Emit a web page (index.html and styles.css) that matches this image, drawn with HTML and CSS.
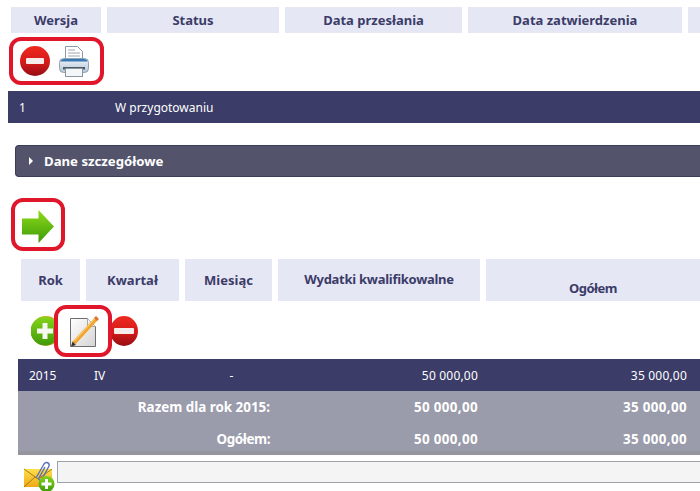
FILE: index.html
```html
<!DOCTYPE html>
<html lang="pl">
<head>
<meta charset="utf-8">
<title>Wersje</title>
<link rel="stylesheet" href="styles.css">
</head>
<body>
<svg class="defs" width="0" height="0" aria-hidden="true">
  <defs>
    <linearGradient id="red" x1="0" y1="0" x2="0" y2="1"><stop offset="0" stop-color="#ee2a20"/><stop offset=".55" stop-color="#d41a1a"/><stop offset="1" stop-color="#960e14"/></linearGradient>
    <linearGradient id="green" x1="0" y1="0" x2="0" y2="1"><stop offset="0" stop-color="#86d41a"/><stop offset="1" stop-color="#3f9a08"/></linearGradient>
    <linearGradient id="arrow" x1="0" y1="0" x2="0" y2="1"><stop offset="0" stop-color="#8fdc1c"/><stop offset="1" stop-color="#3c9a06"/></linearGradient>
    <linearGradient id="body" x1="0" y1="0" x2="0" y2="1"><stop offset="0" stop-color="#eef3f8"/><stop offset="1" stop-color="#b4c6d6"/></linearGradient>
    <linearGradient id="page" x1="0" y1="0" x2="1" y2="1"><stop offset="0" stop-color="#ffffff"/><stop offset="1" stop-color="#d4d4d4"/></linearGradient>
    <linearGradient id="env" x1="0" y1="0" x2="0" y2="1"><stop offset="0" stop-color="#ffdf4a"/><stop offset="1" stop-color="#f0a818"/></linearGradient>
  </defs>
</svg>
<div class="header h-one">
  <div class="hcell">Wersja</div>
  <div class="hcell">Status</div>
  <div class="hcell">Data przesłania</div>
  <div class="hcell">Data zatwierdzenia</div>
  <div class="hcell"></div>
</div>
<div class="tools-one">
  <div class="mark mark-wide">
    <svg width="30" height="30" viewBox="0 0 30 30"><circle cx="15" cy="15" r="15" fill="url(#red)"/><rect x="6" y="12" width="18" height="6" rx="1" fill="#f7ecec"/></svg>
    <svg width="30" height="31" viewBox="0 0 30 31">
      <path d="M6.500 .5h12l5 5v12h-17z" fill="#fff" stroke="#8d99a6"/>
      <path d="M9 4h7M9 7h12M9 10h12" stroke="#9aa6b2"/>
      <rect x=".5" y="12.500" width="29" height="14" rx="4" fill="url(#body)" stroke="#8fa3b5"/>
      <path d="M1.500 15.500c0-1.500 1.500-2.500 3.500-2.500h20c2 0 3.500 1 3.500 2.500z" fill="#3a78b4"/>
      <rect x="4" y="21" width="22" height="2.500" fill="#4c5a66"/>
      <rect x="6.500" y="22.500" width="17" height="8" fill="#f4f6f8" stroke="#8a96a2"/>
    </svg>
  </div>
</div>
<div class="band">
  <span class="band-num">1</span>
  <span>W przygotowaniu</span>
</div>
<div class="accordion">
  <span class="caret"></span>
  <span>Dane szczegółowe</span>
</div>
<div class="tools-two">
  <div class="mark mark-arrow">
    <svg width="32" height="33" viewBox="0 0 32 33"><path d="M0 8.500h16.500V0L32 16.500 16.500 33v-8.500H0z" fill="url(#arrow)"/></svg>
  </div>
</div>
<div class="header h-two">
  <div class="hcell">Rok</div>
  <div class="hcell">Kwartał</div>
  <div class="hcell">Miesiąc</div>
  <div class="hcell up">Wydatki kwalifikowalne</div>
  <div class="hcell down">Ogółem</div>
</div>
<div class="tools-three">
  <svg class="plus" width="30" height="30" viewBox="0 0 30 30"><circle cx="15" cy="15" r="15" fill="#e0a030"/><circle cx="14" cy="15" r="14.500" fill="url(#green)"/><path d="M11.500 7h5v5.500H22v5h-5.500V23h-5v-5.500H6v-5h5.500z" fill="#f4f8ee"/></svg>
  <div class="mark mark-edit">
    <svg width="30" height="31" viewBox="0 0 30 31">
      <path d="M.5 2.500h17l8 8v20H.5z" fill="url(#page)" stroke="#6e6e6e"/>
      <path d="M17.500 2.500v8h8" fill="#f4f4f4" stroke="#a8a8a8"/>
      <path d="M4 27L27 2" stroke="#f2a42a" stroke-width="4"/>
      <path d="M4.500 25L25.500 2" stroke="#fbd67a" stroke-width="1"/>
      <path d="M25.500 3.500L27.500 1.500" stroke="#e2702e" stroke-width="4"/>
      <path d="M2.500 25.500l3.500 3.500-5 1.500z" fill="#40342a"/>
    </svg>
  </div>
  <svg class="minus" width="28" height="30" viewBox="0 0 28 30"><ellipse cx="14" cy="15" rx="14" ry="15" fill="url(#red)"/><rect x="4" y="12" width="20" height="6" rx="1" fill="#f7ecec"/></svg>
</div>
<div class="data-table">
  <div class="row row-data">
    <span>2015</span><span>IV</span><span class="dash">-</span><span class="num">50 000,00</span><span class="num last">35 000,00</span>
  </div>
  <div class="row row-sum">
    <span class="sum-label">Razem dla rok 2015:</span><span class="num">50 000,00</span><span class="num last">35 000,00</span>
  </div>
  <div class="row row-sum row-end">
    <span class="sum-label sum-short">Ogółem:</span><span class="num">50 000,00</span><span class="num last">35 000,00</span>
  </div>
</div>
<div class="attach">
  <svg class="env" width="31" height="32" viewBox="0 0 31 32">
    <rect x="0" y="9" width="28" height="18" fill="url(#env)"/>
    <path d="M0 9l14 10L28 9M0 27l11-10M28 27L17 17" fill="none" stroke="#8a6a10" stroke-width=".8"/>
    <path d="M12 18L20 4c2-3 6-1 5 2l-7 13c-1.500 2-4 1-3-1l6-11" fill="none" stroke="#5a6fb8" stroke-width="1.400"/>
    <circle cx="22.500" cy="24" r="8" fill="url(#green)"/>
    <path d="M21 19h3v3.500h3.500v3H24V29h-3v-3.500h-3.500v-3H21z" fill="#fff"/>
  </svg>
  <div class="field"></div>
</div>
</body>
</html>
```
FILE: styles.css
```css
html, body {
  margin: 0;
  padding: 0;
  width: 700px;
  height: 491px;
  overflow: hidden;
  background: #fff;
}
body {
  font-family: "Noto Sans", "DejaVu Sans", sans-serif;
  font-size: 12px;
  color: #fff;
}
.defs { position: absolute; }
.header {
  display: grid;
  column-gap: 6px;
}
.h-one {
  margin: 7px 0 0 11px;
  height: 26px;
  grid-template-columns: 90px 172px 177px 214px 12px;
}
.h-two {
  margin: 8px 0 0 21px;
  height: 42px;
  grid-template-columns: 59px 93px 87px 202px 214px;
}
.hcell {
  display: flex;
  align-items: center;
  justify-content: center;
  background: #e6e7f5;
  color: #3b3c68;
  font-weight: bold;
  font-size: 13px;
  white-space: nowrap;
}
.hcell.up { padding-bottom: 2px; box-sizing: border-box; letter-spacing: -0.27px; }
.hcell.down { padding-top: 15px; box-sizing: border-box; letter-spacing: -0.5px; }
.mark {
  box-sizing: border-box;
  display: flex;
  align-items: center;
  background: #fff;
  border: 4px solid #e0162b;
}
.tools-one { margin: 4px 0 0 9px; height: 48px; }
.mark-wide {
  width: 95px;
  height: 48px;
  border-radius: 12px;
  padding-left: 7px;
  gap: 9px;
}
.band {
  display: flex;
  align-items: center;
  margin: 6px 0 0 8px;
  height: 32px;
  background: #3b3c68;
}
.band-num { width: 107px; padding-left: 11px; box-sizing: border-box; }
.accordion {
  display: flex;
  align-items: center;
  box-sizing: border-box;
  margin: 22px 0 0 15px;
  height: 32px;
  background: #53546c;
  border: 1px solid #3b3c58;
  border-right: 0;
  border-radius: 4px 0 0 4px;
  font-weight: bold;
  font-size: 13.2px;
  padding-left: 13px;
}
.caret {
  width: 0;
  height: 0;
  border-left: 4px solid #fff;
  border-top: 4px solid transparent;
  border-bottom: 4px solid transparent;
  margin-right: 11px;
}
.tools-two { margin: 21px 0 0 11px; height: 53px; }
.mark-arrow {
  width: 54px;
  height: 53px;
  border-radius: 12px;
  padding: 3px 0 0 7px;
}
.tools-three {
  display: flex;
  align-items: center;
  margin: 4px 0 0 31px;
  height: 52px;
}
.plus { flex: none; }
.mark-edit {
  position: relative;
  flex: none;
  width: 58px;
  height: 52px;
  margin-left: -7px;
  border-radius: 12px;
  padding-left: 12px;
  z-index: 1;
}
.minus { flex: none; margin-left: -2px; }
.data-table { margin: 2px 0 0 18px; }
.row {
  display: grid;
  grid-template-columns: 65px 99px 93px 208px 217px;
  align-items: center;
  height: 32px;
}
.row > span { white-space: nowrap; }
.row-data { background: #3b3c68; }
.row-data > span:nth-child(-n+2) { padding-left: 11px; }
.row-data .num { letter-spacing: 0.2px; }
.dash { text-align: center; padding-left: 6px; }
.num { text-align: right; padding-right: 5px; }
.num.last { padding-right: 13px; }
.row-sum {
  background: #9a9bab;
  font-weight: bold;
  font-size: 13.4px;
}
.row-sum .num { letter-spacing: 0.35px; }
.row-end { box-shadow: inset 0 -4px 0 #94959f; }
.sum-label {
  grid-column: 1 / span 3;
  text-align: right;
  padding-right: 5px;
}
.sum-short { letter-spacing: -0.4px; }
.attach {
  display: flex;
  margin: 6px 0 0 24px;
}
.env { flex: none; margin-top: -1px; margin-right: 2px; }
.field {
  flex: 1;
  height: 22px;
  box-sizing: border-box;
  background: #f4f4f4;
  border: 1px solid #a0a0a8;
  border-right: 0;
}
```
